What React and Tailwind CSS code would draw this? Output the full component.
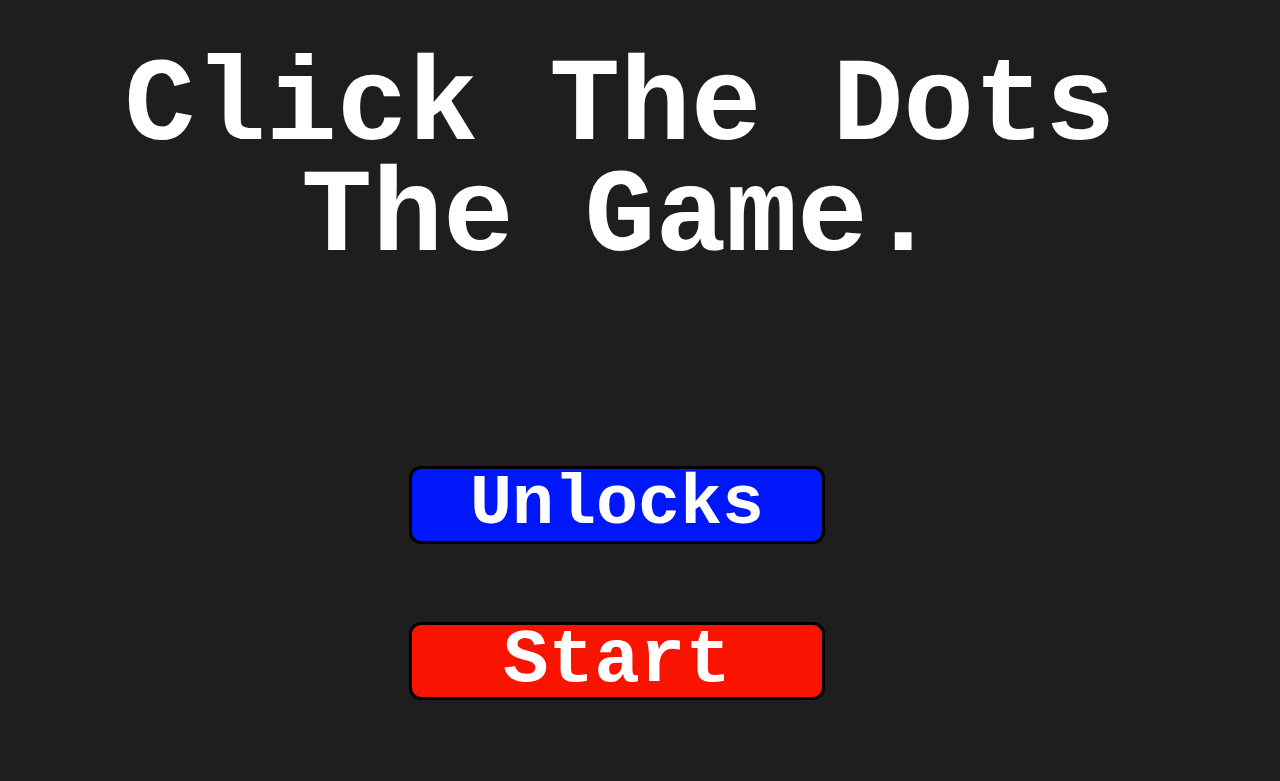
import React from "react";

// Main menu buttons
const menuItems = [
  { label: "Unlocks", className: "bg-[#0018f9] text-[70px]" },
  { label: "Start", className: "bg-[#f81400] text-[76px]" },
];

const App = () => {
  return (
    <main className="min-h-screen bg-[#1e1e1e] pt-[52px] pb-20 font-['Liberation_Mono',monospace] font-bold text-white">
      {/* Title */}
      <h1 className="pr-10 text-center text-[118px] leading-[111px] whitespace-nowrap">
        Click The Dots
        <br />
        The Game.
      </h1>

      {/* Menu */}
      <nav className="mt-48 flex flex-col items-center gap-[78px] pr-[46px]">
        {menuItems.map((item) => (
          <button
            key={item.label}
            type="button"
            className={`flex h-[78px] w-[416px] cursor-pointer items-center justify-center rounded-xl border-3 border-black leading-none ${item.className}`}
          >
            {item.label}
          </button>
        ))}
      </nav>
    </main>
  );
};

export default App;
